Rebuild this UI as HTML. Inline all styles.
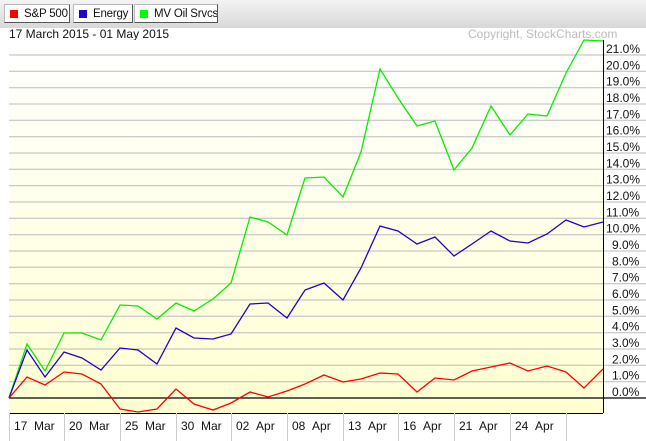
<!DOCTYPE html>
<html><head><style>
body{margin:0;width:646px;height:441px;overflow:hidden;background:#fff;font-family:"Liberation Sans",Arial,sans-serif;position:relative}
.bar{position:absolute;left:0;top:0;width:646px;height:28px;background:linear-gradient(#f4f4f4,#d8d8d8)}
.btn{position:absolute;top:4px;height:19px;background:#fff;border:1px solid #bbb;border-right-color:#555;border-bottom-color:#555;font-size:11.5px;line-height:18px;color:#111;box-sizing:border-box;padding-left:19px;white-space:nowrap;overflow:hidden;letter-spacing:-0.2px}
.btn i{position:absolute;left:5px;top:5px;width:8px;height:8px}
.t{position:absolute;font-size:12px;color:#111;white-space:nowrap}
</style></head><body>
<div class="bar"></div>
<div class="btn" style="left:4px;width:66px"><i style="background:#f00"></i>S&amp;P 500</div>
<div class="btn" style="left:73px;width:60px"><i style="background:#2200cc"></i>Energy</div>
<div class="btn" style="left:134px;width:84px"><i style="background:#0f0"></i>MV Oil Srvcs</div>
<div class="t" style="left:9px;top:27px">17 March 2015 - 01 May 2015</div>
<div class="t" style="left:468px;top:27px;color:#bbb">Copyright, StockCharts.com</div>
<svg width="646" height="441" style="position:absolute;left:0;top:0" font-family="Liberation Sans, Arial, sans-serif" font-size="12">
<defs><linearGradient id="g" x1="0" y1="0" x2="0" y2="1"><stop offset="0" stop-color="#fff"/><stop offset="1" stop-color="#ffffd2"/></linearGradient></defs>
<rect x="9" y="40" width="594" height="373" fill="url(#g)"/>
<g stroke="#bbb">
<path d="M9 55H646M9 71.3H646M9 87.7H646M9 104H646M9 120.3H646M9 136.7H646M9 153H646M9 169.3H646M9 185.7H646M9 202H646M9 218.3H646M9 234.7H646M9 251H646M9 267.3H646M9 283.7H646M9 300H646M9 316.3H646M9 332.7H646M9 349H646M9 365.3H646M9 381.7H646"/>
</g>
<line x1="9" y1="398" x2="646" y2="398" stroke="#000" stroke-width="1.3"/>
<line x1="603.5" y1="40" x2="603.5" y2="413" stroke="#000"/>
<line x1="9" y1="413.5" x2="603" y2="413.5" stroke="#000"/>
<g stroke="#ccc"><path d="M9.5 413V441M64.5 413V441M120.5 413V441M176.5 413V441M231.5 413V441M287.5 413V441M343.5 413V441M398.5 413V441M454.5 413V441M510.5 413V441M566.5 413V441"/></g>
<g fill="#111" font-size="12">
<text x="14" y="430">17&#160;&#160;Mar</text><text x="69" y="430">20&#160;&#160;Mar</text><text x="125" y="430">25&#160;&#160;Mar</text><text x="181" y="430">30&#160;&#160;Mar</text><text x="236" y="430">02&#160;&#160;Apr</text><text x="292" y="430">08&#160;&#160;Apr</text><text x="348" y="430">13&#160;&#160;Apr</text><text x="403" y="430">16&#160;&#160;Apr</text><text x="459" y="430">21&#160;&#160;Apr</text><text x="515" y="430">24&#160;&#160;Apr</text>
</g>
<g fill="#111" font-size="12">
<text x="606" y="53">21.0%</text><text x="606" y="69.3">20.0%</text><text x="606" y="85.7">19.0%</text><text x="606" y="102">18.0%</text><text x="606" y="118.3">17.0%</text><text x="606" y="134.7">16.0%</text><text x="606" y="151">15.0%</text><text x="606" y="167.3">14.0%</text><text x="606" y="183.7">13.0%</text><text x="606" y="200">12.0%</text><text x="606" y="216.3">11.0%</text><text x="606" y="232.7">10.0%</text><text x="612" y="249">9.0%</text><text x="612" y="265.3">8.0%</text><text x="612" y="281.7">7.0%</text><text x="612" y="298">6.0%</text><text x="612" y="314.3">5.0%</text><text x="612" y="330.7">4.0%</text><text x="612" y="347">3.0%</text><text x="612" y="363.3">2.0%</text><text x="612" y="379.7">1.0%</text><text x="612" y="396">0.0%</text>
</g>
<polyline fill="none" stroke="#00ee00" stroke-width="1.3" points="9,398 27,344 45,371 64,333 82,333 101,340 120,305 138,306 157,319 176,303 194,311 213,299 231,283 250,217 268,222 287,235 305,178 324,177 343,197 361,152 380,69 398,98 417,126 435,121 454,170 472,148 491,106 510,135 528,114 547,116 566,73 584,40 603,41"/>
<polyline fill="none" stroke="#2200cc" stroke-width="1.3" points="9,398 27,350 45,377 64,352 82,358 101,370 120,348 138,350 157,364 176,328 194,338 213,339 231,334 250,304 268,303 287,318 305,290 324,283 343,300 361,268 380,226 398,231 417,244 435,237 454,256 472,244 491,231 510,241 528,243 547,234 566,220 584,227 603,222"/>
<polyline fill="none" stroke="#ff0000" stroke-width="1.3" points="9,398 27,377 45,385 64,372 82,374 101,384 120,409 138,412 157,409 176,389 194,404 213,410 231,403 250,392 268,397 287,391 305,384 324,375 343,382 361,379 380,373 398,374 417,392 435,378 454,380 472,371 491,367 510,363 528,371 547,366 566,372 584,388 603,369"/>
</svg>
</body></html>
